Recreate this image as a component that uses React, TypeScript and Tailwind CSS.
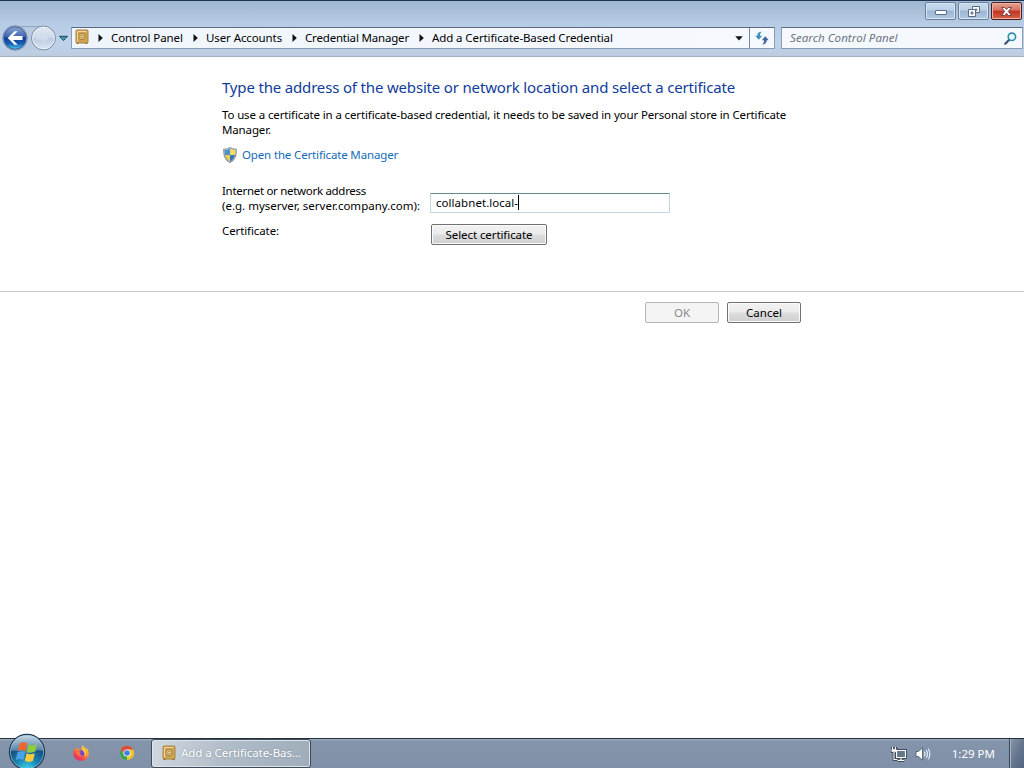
import type { ReactNode } from "react";

function SafeIcon({ className = "" }: { className?: string }) {
  return (
    <svg viewBox="0 0 14 16" className={`h-4 w-3.5 shrink-0 ${className}`}>
      <rect x="1" y="1" width="12" height="13" rx="1" fill="#cfa554" stroke="#a9823c" />
      <path d="M2.5 12.5V2.5H11.5" fill="none" stroke="#f0d79a" />
      <circle cx="7" cy="7.5" r="3.3" fill="#e3c27c" stroke="#98763a" strokeWidth=".9" />
      <circle cx="7" cy="7.5" r="1.3" fill="#f4e6bd" stroke="#a27d38" strokeWidth=".8" />
      <path d="M1.5 14.5h2M10.5 14.5h2" stroke="#8d6a2b" />
    </svg>
  );
}

function Chevron() {
  return (
    <svg viewBox="0 0 5 8" className="h-2 w-[5px] shrink-0">
      <path d="M.5 0L4.8 4L.5 8Z" fill="#111" />
    </svg>
  );
}

function BackForward() {
  return (
    <svg viewBox="0 0 70 30" className="h-[30px] w-[70px] shrink-0">
      <defs>
        <linearGradient id="back" x1="0" y1="0" x2="0" y2="1">
          <stop offset="0" stopColor="#8ea7d6" />
          <stop offset=".42" stopColor="#4369b4" />
          <stop offset=".5" stopColor="#123c94" />
          <stop offset=".75" stopColor="#1460b4" />
          <stop offset="1" stopColor="#52c6f0" />
        </linearGradient>
        <linearGradient id="fwd" x1="0" y1="0" x2="0" y2="1">
          <stop offset="0" stopColor="#e2e9f3" />
          <stop offset=".48" stopColor="#cdd9e9" />
          <stop offset=".52" stopColor="#b9c9df" />
          <stop offset="1" stopColor="#dce8f5" />
        </linearGradient>
      </defs>
      <path d="M15 3H44V27H15Z" fill="#b3c3da" opacity=".35" />
      <path d="M18 3.5H40" stroke="#94a5be" />
      <circle cx="15" cy="15" r="12.3" fill="#cbd7e7" stroke="#7e8ea9" />
      <circle cx="15" cy="15" r="11.2" fill="url(#back)" stroke="#2c4b86" strokeWidth=".8" />
      <path d="M14.5 8.2L7.7 15L14.5 21.8H17.7L13 16.9H22.5V13.1H13L17.7 8.2Z" fill="#fff" />
      <circle cx="43.5" cy="15" r="11.9" fill="url(#fwd)" stroke="#74849d" />
      <circle cx="43.5" cy="15" r="10.9" fill="none" stroke="#edf3fa" strokeWidth=".9" />
      <path d="M36.5 14.2h8l-3-3h2.5l4.5 4.5-4.5 4h-2.5l3-3h-8z" fill="#d9e2ee" opacity=".7" />
      <path d="M59.5 13.3H67.5L63.5 17.5Z" fill="#3aa4b0" stroke="#1f4560" strokeWidth="1" />
    </svg>
  );
}

function RefreshIcon() {
  return (
    <svg viewBox="0 0 14 14" className="h-3.5 w-3.5">
      <path d="M6.8 .8C3.6 .8 2.3 2.4 2.3 4.8H.2L3.7 8.8L7.2 4.8H5C5 2.9 5.4 1.7 6.8 .8Z" fill="#3b93ba" />
      <path d="M7.2 13.4C10.4 13.4 11.7 11.8 11.7 9.2H13.8L10.3 5.2L6.8 9.2H9C9 11.2 8.6 12.4 7.2 13.4Z" fill="#41679f" />
    </svg>
  );
}

function SearchIcon() {
  return (
    <svg viewBox="0 0 13 13" className="h-[13px] w-[13px] shrink-0">
      <path d="M5.2 7.8L1.3 11.7" stroke="#3b4f73" strokeWidth="2.2" strokeLinecap="round" />
      <circle cx="7.9" cy="4.8" r="3.7" fill="#e9fafe" stroke="#2e8fae" strokeWidth="1.6" />
    </svg>
  );
}

function CaptionButton({ close, children }: { close?: boolean; children: ReactNode }) {
  return (
    <button
      className={`flex h-[18px] w-[31px] items-center justify-center rounded-[2px] border ${
        close
          ? "border-[#4b1d22] bg-[linear-gradient(#e8a493,#d7705d_45%,#bf3320_50%,#d8644a)] shadow-[inset_0_0_0_1px_#f0b4a6]"
          : "border-[#69809f] bg-[linear-gradient(#c9dbed,#b9cfe6_45%,#9ab5d2_50%,#b3cae3)] shadow-[inset_0_0_0_1px_#d7e4f2]"
      }`}
    >
      {children}
    </button>
  );
}

function TitleBar() {
  return (
    <div className="flex h-[26px] items-start justify-end gap-0.5 pt-px pr-0.5">
      <CaptionButton>
        <svg viewBox="0 0 12 10" className="h-2.5 w-3">
          <rect x=".5" y="4.5" width="11" height="4" rx=".5" fill="#fff" stroke="#5b6b86" />
        </svg>
      </CaptionButton>
      <CaptionButton>
        <svg viewBox="0 0 12 11" className="h-[11px] w-3">
          <path d="M4.5.5h7v6h-7z" fill="#fff" stroke="#5b6b86" />
          <path d="M7 3h2v1.5H7z" fill="#8ea6c4" stroke="#5b6b86" strokeWidth=".7" />
          <path d="M.5 3.5h7v7h-7z" fill="#fff" stroke="#5b6b86" />
          <path d="M3 6h2v2H3z" fill="#8ea6c4" stroke="#5b6b86" strokeWidth=".8" />
        </svg>
      </CaptionButton>
      <CaptionButton close>
        <svg viewBox="0 0 13 11" className="h-[11px] w-[13px]">
          <path
            d="M1.5 1.5H4.7L6.5 3.6L8.3 1.5H11.5L8.3 5.4L11.5 9.5H8.3L6.5 7.3L4.7 9.5H1.5L4.7 5.4Z"
            fill="#fff"
            stroke="#5c3038"
            strokeWidth=".8"
          />
        </svg>
      </CaptionButton>
    </div>
  );
}

function AddressBar() {
  return (
    <div className="flex h-[22px] items-center">
      <BackForward />
      <div className="ml-px flex h-[22px] w-[704px] items-center border border-[#8a9db6] border-t-[#5c6a80] bg-[linear-gradient(90deg,#eff5fc,#f6f9fe)] text-black">
        <SafeIcon className="mb-0.5 ml-[3px]" />
        <div className="ml-[9px] flex items-center">
          <Chevron />
          <span className="ml-2 w-[82px] pb-0.5 tracking-[-0.08px]">Control Panel</span>
          <Chevron />
          <span className="ml-2 w-[86px] pb-0.5 tracking-[-0.1px]">User Accounts</span>
          <Chevron />
          <span className="ml-2 w-[114px] pb-0.5 tracking-[-0.18px]">Credential Manager</span>
          <Chevron />
          <span className="ml-2 pb-0.5 tracking-[-0.1px]">Add a Certificate-Based Credential</span>
        </div>
        <svg viewBox="0 0 8 5" className="mr-1.5 ml-auto h-[5px] w-2">
          <path d="M.3 .3H7.7L4 4.4Z" fill="#111" />
        </svg>
        <div className="flex h-full w-[25px] items-center justify-center border-l border-[#7486a2]">
          <RefreshIcon />
        </div>
      </div>
      <div className="ml-1.5 flex h-[22px] w-[242px] items-center border border-[#8a9db6] border-t-[#5c6a80] bg-[#f5f9fe] pr-[5px] pl-2">
        <span className="grow pb-0.5 tracking-[0.07px] text-[#6d7480] italic">Search Control Panel</span>
        <SearchIcon />
      </div>
    </div>
  );
}

function ShieldIcon() {
  return (
    <svg viewBox="0 0 14 16" className="h-4 w-3.5 shrink-0">
      <clipPath id="shield">
        <path d="M7 1.5C8.5 2.7 10.5 3 12.6 3C12.8 8.5 11.3 12.5 7 14.8C2.7 12.5 1.2 8.5 1.4 3C3.5 3 5.5 2.7 7 1.5Z" />
      </clipPath>
      <g clipPath="url(#shield)">
        <path d="M0 0H7V8H0Z" fill="#4b93cf" />
        <path d="M7 0H14V8H7Z" fill="#f2dc5c" />
        <path d="M0 8H7V16H0Z" fill="#ecd04c" />
        <path d="M7 8H14V16H7Z" fill="#3577bd" />
      </g>
      <path
        d="M7 .8C8.5 2.1 10.8 2.4 13.2 2.4C13.5 8.8 11.9 13 7 15.4C2.1 13 .5 8.8 .8 2.4C3.2 2.4 5.5 2.1 7 .8Z"
        fill="none"
        stroke="#8b98a3"
        strokeWidth="1.3"
      />
    </svg>
  );
}

function PushButton({ className, disabled, children }: { className: string; disabled?: boolean; children: ReactNode }) {
  return (
    <button
      disabled={disabled}
      className={`flex h-[21px] items-center justify-center rounded-[2px] border ${
        disabled
          ? "border-[#b4b6b8] bg-[#f4f4f4] text-[#8b8b8b]"
          : "border-[#707070] bg-[linear-gradient(#f2f2f2,#ebebeb_48%,#dddddd_52%,#cfcfcf)] text-black shadow-[inset_0_0_0_1px_#fbfbfb]"
      } ${className}`}
    >
      {children}
    </button>
  );
}

function StartOrb() {
  return (
    <svg viewBox="0 0 38 38" className="h-[38px] w-[38px] shrink-0">
      <defs>
        <radialGradient id="orb" cx=".5" cy="1" r=".95">
          <stop offset="0" stopColor="#3fd6ef" />
          <stop offset=".35" stopColor="#1a86b4" />
          <stop offset=".7" stopColor="#17507f" />
          <stop offset="1" stopColor="#46688b" />
        </radialGradient>
        <linearGradient id="gloss" x1="0" y1="0" x2="0" y2="1">
          <stop offset="0" stopColor="#dcecf5" stopOpacity=".85" />
          <stop offset="1" stopColor="#a5c2d6" stopOpacity=".35" />
        </linearGradient>
      </defs>
      <circle cx="19" cy="19" r="17.6" fill="url(#orb)" stroke="#1e3950" strokeWidth="1.2" />
      <path d="M2.5 18C3 8 10 2.3 19 2.3S35 8 35.5 18C28 15.5 25 20 19 20S9 16 2.5 18Z" fill="url(#gloss)" />
      <path d="M11.7 10.6C14.6 8.7 17 9.2 19.2 10.6L17.5 18.1C15 16.7 12.4 16.6 9.8 18Z" fill="#ee6630" />
      <path d="M20.6 11.3C23.2 12.8 26 12.8 29 11L27.2 18.6C24.4 20 21.5 20.2 18.9 18.8Z" fill="#8ecb3d" />
      <path d="M9.4 19.5C12 18.1 14.6 18.3 17.1 19.6L15.4 27.1C12.9 25.7 10.3 25.7 7.7 27.2Z" fill="#48a4e6" />
      <path d="M18.5 20.3C21.2 21.7 24 21.6 26.8 20.2L25 27.8C22.2 29.3 19.4 29.2 16.8 27.8Z" fill="#fccb3b" />
      <circle cx="19" cy="19" r="16.6" fill="none" stroke="#b6d8e9" strokeWidth=".8" opacity=".7" />
    </svg>
  );
}

function FirefoxIcon() {
  return (
    <svg viewBox="0 0 16 16" className="h-4 w-4 shrink-0">
      <defs>
        <linearGradient id="fox" x1=".9" y1="0" x2=".2" y2="1">
          <stop offset="0" stopColor="#ffe14a" />
          <stop offset=".4" stopColor="#ff9730" />
          <stop offset=".75" stopColor="#f4434e" />
          <stop offset="1" stopColor="#dc2471" />
        </linearGradient>
      </defs>
      <path d="M9.4.2C11.6 1.4 12 3.2 13 4C13.2 3.3 13 2.8 12.9 2.4C15 4.2 16 6.5 15.7 9C15.2 13 12 15.8 8 15.8S.4 12.6.3 8.4C.2 6.4 1 4.5 2.4 2.8L2.9 4.2L4.8 2.5L5.1 4.1C6.6 3.8 7.8 4 8.8 4.6C8.3 3 8.4 1.5 9.4.2Z" fill="url(#fox)" />
      <circle cx="8.2" cy="8.2" r="3.2" fill="#7a43cf" />
      <path d="M4 7.2C5.2 5.7 6.8 6 8.1 7.1L6.3 8.1C6.1 9.7 7.8 10.5 9.7 9.7C8.6 12.1 4.5 11.7 4 7.2Z" fill="#ff8330" />
      <path d="M10 3.5C13.7 5.4 14 9.6 11.7 11.8C12.4 9 11.7 6.6 9.2 5.2Z" fill="#ffd43c" />
    </svg>
  );
}

function ChromeIcon() {
  return (
    <svg viewBox="0 0 16 16" className="h-4 w-4 shrink-0">
      <circle cx="8" cy="8" r="7.2" fill="#efc52f" />
      <path d="M1.76 4.4L4.9 9.8L8 11.2L7.9 15.2A7.2 7.2 0 0 1 1.76 4.4Z" fill="#36a35a" />
      <path d="M1.76 4.4A7.2 7.2 0 0 1 14.24 4.4H8L4.8 8.8Z" fill="#dd4b3e" />
      <circle cx="8" cy="8" r="3.6" fill="#fff" />
      <circle cx="8" cy="8" r="2.8" fill="#407fdd" />
    </svg>
  );
}

function NetworkIcon() {
  return (
    <svg viewBox="0 0 16 16" className="h-4 w-4 shrink-0">
      <path d="M5.5 4.5h9v7h-9zM10 12v2.2M6.8 14.4h6.4M1.5 1v2M4.5 1v2M.8 3.3h4.4v2.4H.8zM3 6v7.5h3" fill="none" stroke="#2b3644" strokeWidth="2.6" />
      <path d="M5.5 4.5h9v7h-9z" fill="#64768c" stroke="#fff" strokeWidth="1.2" />
      <path d="M10 12v2.2M6.8 14.4h6.4M1.5 1v2M4.5 1v2M3 6v7.5h3" fill="none" stroke="#fff" strokeWidth="1.1" />
      <path d="M.8 3.3h4.4v2.4H.8z" fill="#fff" stroke="#fff" strokeWidth=".6" />
    </svg>
  );
}

function VolumeIcon() {
  return (
    <svg viewBox="0 0 16 16" className="h-4 w-4 shrink-0">
      <path d="M1 5.5h2.5L7.5 1.8V14.2L3.5 10.5H1Z" fill="#fff" stroke="#45556a" strokeWidth=".8" />
      <path d="M9.3 5.6Q10.7 8 9.3 10.4M11.3 4Q13.6 8 11.3 12M13.3 2.7Q16.4 8 13.3 13.3" fill="none" stroke="#eef4fa" strokeWidth="1.1" />
    </svg>
  );
}

function Taskbar() {
  return (
    <footer className="flex h-[30px] items-center border-t border-[#26313f] bg-[linear-gradient(#a4b1c3,#8494ab_2px,#7f90a8)]">
      <div className="-mt-1 ml-2">
        <StartOrb />
      </div>
      <div className="mb-px ml-[27px] flex items-center gap-[30px]">
        <FirefoxIcon />
        <ChromeIcon />
      </div>
      <div className="ml-4 flex h-[29px] w-40 items-center rounded-[3px] border border-[#3d4a5b] bg-[linear-gradient(100deg,#d0d8df,#b1bdc9_45%,#9facba)] pb-0.5 pl-2.5 shadow-[inset_0_0_0_1px_#dce3e9]">
        <SafeIcon />
        <span className="ml-[5px] tracking-[-0.06px] text-white [text-shadow:0_0_2px_#7c8a99]">Add a Certificate-Bas...</span>
      </div>
      <div className="ml-auto flex h-full items-center">
        <NetworkIcon />
        <span className="ml-2">
          <VolumeIcon />
        </span>
        <span className="mr-3.5 ml-[21px] text-white">1:29 PM</span>
        <div className="h-full w-[15px] border-l border-[#3b4859] bg-[linear-gradient(115deg,#8999ae,#65768e_50%,#52647e)] shadow-[inset_1px_0_0_#a7b4c4]" />
      </div>
    </footer>
  );
}

export default function App() {
  return (
    <div className="flex h-[768px] w-[1024px] flex-col overflow-hidden bg-white font-['Noto_Sans','Segoe_UI',sans-serif] text-[11.5px] leading-[15px] whitespace-nowrap text-black">
      <header className="h-[57px] border-t border-b border-t-[#1f3450] border-b-[#a0afc3] bg-[linear-gradient(#a0b7d0,#b8cde6_45%,#bfd2e9_80%,#bdcbdf)]">
        <TitleBar />
        <AddressBar />
      </header>

      <main className="grow">
        <section className="h-[234px] pt-5 pl-[222px]">
          <h1 className="text-[15px] leading-5 tracking-[-0.17px] text-[#103c9a]">
            Type the address of the website or network location and select a certificate
          </h1>
          <p className="mt-2.5 tracking-[-0.13px]">
            To use a certificate in a certificate-based credential, it needs to be saved in your Personal store in Certificate
            <br />
            Manager.
          </p>
          <a className="mt-2.5 flex h-[15px] items-center gap-1.5 pl-px tracking-[-0.15px] text-[#136bb8]">
            <ShieldIcon />
            <span className="-ml-px">Open the Certificate Manager</span>
          </a>
          <div className="mt-[21px] flex">
            <label className="w-[208px]">
              <span className="tracking-[-0.3px]">Internet or network address</span>
              <br />
              (e.g. myserver, server.company.com):
            </label>
            <div className="mt-2.5 flex h-5 w-60 items-center rounded-[1px] border border-[#c3d5e3] border-t-[#64898f] pb-px pl-[5px]">
              <span className="tracking-[0.05px]">collabnet.local-</span>
              <span className="h-[15px] w-px bg-black" />
            </div>
          </div>
          <div className="mt-2.5 flex">
            <span className="w-[209px] tracking-[-0.1px]">Certificate:</span>
            <PushButton className="mt-px w-[116px] tracking-[-0.08px]">Select certificate</PushButton>
          </div>
        </section>
        <section className="flex gap-2 border-t border-[#c8c8c8] pt-2.5 pl-[645px]">
          <PushButton disabled className="w-[74px]">
            OK
          </PushButton>
          <PushButton className="w-[74px]">Cancel</PushButton>
        </section>
      </main>

      <Taskbar />
    </div>
  );
}
